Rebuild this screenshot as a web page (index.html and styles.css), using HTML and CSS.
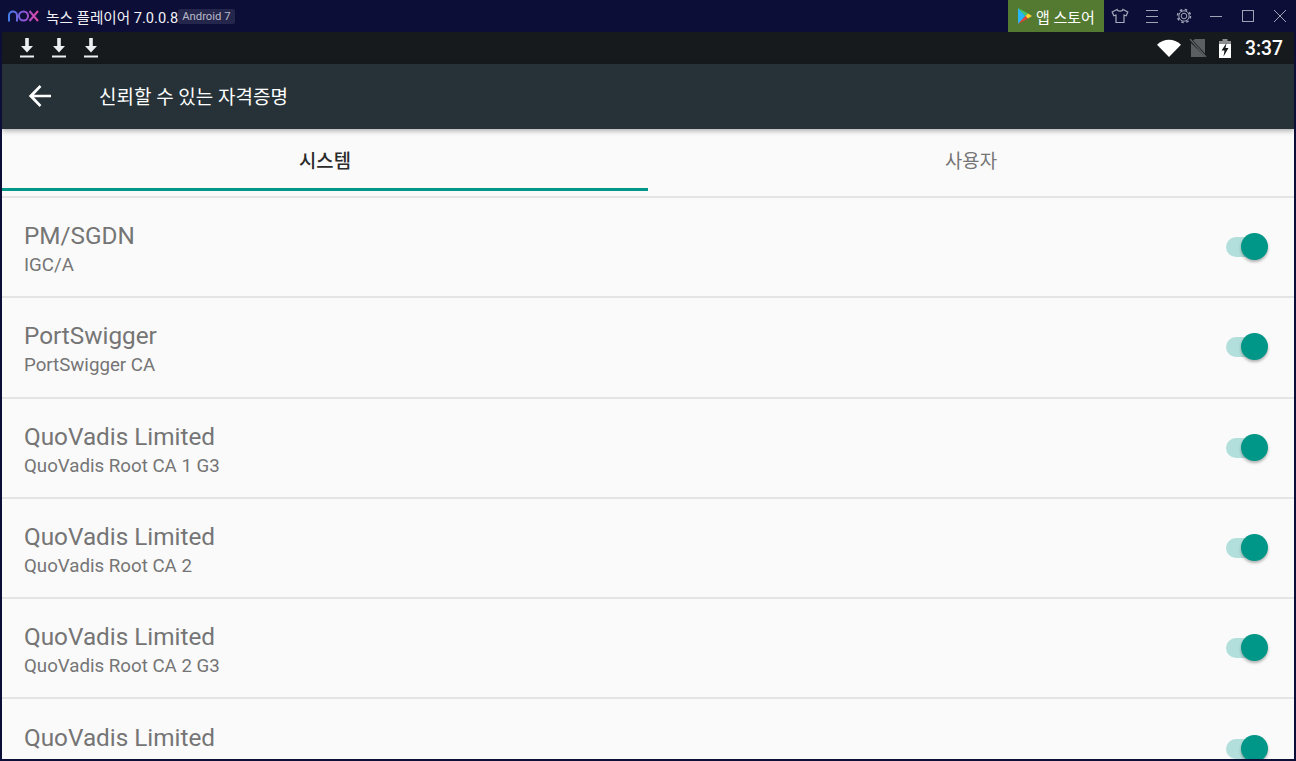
FILE: index.html
```html
<!DOCTYPE html>
<html lang="ko">
<head>
    <meta charset="UTF-8">
    <title>Nox Player</title>
    <link rel="stylesheet" href="styles.css">
</head>
<body>
<div class="window">
    <header class="titlebar">
        <div class="brand">
            <svg class="nox-logo" width="31" height="12" viewBox="0 0 31 12" fill="none" stroke-width="2">
                <defs>
                    <linearGradient id="nox-grad" gradientUnits="userSpaceOnUse" x1="0" y1="0" x2="31" y2="0">
                        <stop offset="0" stop-color="#3f7fe8"/>
                        <stop offset="0.5" stop-color="#8a55d8"/>
                        <stop offset="1" stop-color="#e8489c"/>
                    </linearGradient>
                </defs>
                <path d="M1 11.500V5.500a4 4 0 0 1 8 0V11.500" stroke="url(#nox-grad)"/>
                <circle cx="15.500" cy="6" r="4.500" stroke="url(#nox-grad)"/>
                <path d="M21.500 1l8.500 10M30 1L21.500 11" stroke="url(#nox-grad)"/>
            </svg>
            <span class="app-name">녹스 플레이어 7.0.0.8</span>
            <span class="android-tag">Android 7</span>
        </div>
        <div class="win-actions">
            <a class="store-btn" href="#">
                <svg width="14" height="16" viewBox="0 0 14 16">
                    <path d="M0 0L7.5 8L0 16Z" fill="#29b6f6"/>
                    <path d="M0 0L10 5.5L7.5 8Z" fill="#43c66a"/>
                    <path d="M0 16L10 10.5L7.5 8Z" fill="#e8413c"/>
                    <path d="M10 5.500L14 8L10 10.500L7.500 8Z" fill="#fdd22c"/>
                </svg>
                <span>앱 스토어</span>
            </a>
            <button class="win-btn">
                <svg width="18" height="16" viewBox="0 0 18 16" fill="none" stroke="#a9aabc" stroke-width="1.200">
                    <path d="M6 1.500L1.200 4l1.600 3.800L5 7v7.500h8V7l2.200.8L16.800 4 12 1.500c-.5 2.200-5.500 2.200-6 0Z"/>
                </svg>
            </button>
            <button class="win-btn">
                <svg width="16" height="16" viewBox="0 0 16 16" stroke="#a2a3b6">
                    <path d="M2 2.500h12M2 8.500h12M2 14.500h12"/>
                </svg>
            </button>
            <button class="win-btn">
                <svg width="16" height="16" viewBox="0 0 16 16" fill="none" stroke="#a2a3b6">
                    <circle cx="8" cy="8" r="2.800"/>
                    <circle cx="8" cy="8" r="5.200"/>
                    <circle cx="8" cy="8" r="6.500" stroke-width="1.500" stroke-dasharray="2.550 2.550"/>
                </svg>
            </button>
            <button class="win-btn">
                <svg width="16" height="16" viewBox="0 0 16 16" stroke="#a2a3b6">
                    <path d="M2 8.500h12"/>
                </svg>
            </button>
            <button class="win-btn">
                <svg width="16" height="16" viewBox="0 0 16 16" fill="none" stroke="#a2a3b6">
                    <rect x="2.500" y="2.500" width="11" height="11"/>
                </svg>
            </button>
            <button class="win-btn">
                <svg width="16" height="16" viewBox="0 0 16 16" stroke="#a2a3b6">
                    <path d="M2 2l12 12M14 2L2 14"/>
                </svg>
            </button>
        </div>
    </header>

    <main class="screen">
        <div class="statusbar">
            <div class="notif-icons">
                <svg width="16" height="20" viewBox="0 0 16 20"><path d="M6.200 0h3.600v8H14l-6 6.500L2 8h4.200zM1 17.500h14v2H1z" fill="#eceff1"/></svg>
                <svg width="16" height="20" viewBox="0 0 16 20"><path d="M6.200 0h3.600v8H14l-6 6.500L2 8h4.200zM1 17.500h14v2H1z" fill="#eceff1"/></svg>
                <svg width="16" height="20" viewBox="0 0 16 20"><path d="M6.200 0h3.600v8H14l-6 6.500L2 8h4.200zM1 17.500h14v2H1z" fill="#eceff1"/></svg>
            </div>
            <div class="sys-icons">
                <svg class="wifi-icon" width="24" height="18" viewBox="0 0 24 18"><path d="M0 5.800C6.800 -0.900 17.200 -0.900 24 5.800L12 18Z" fill="#fff"/></svg>
                <svg class="sim-icon" width="18" height="18" viewBox="0 0 18 18">
                    <path d="M4 1.500 6 0h10v14.500Z M2 4v14h13.500v-1Z" fill="#5c5f61"/>
                    <path d="M1 0l16 18" stroke="#5c5f61" stroke-width="1.500"/>
                </svg>
                <svg class="battery-icon" width="14" height="19" viewBox="0 0 14 19">
                    <path d="M4.500 0h5v2H13v3H1V2h3.500z" fill="#8e9092"/>
                    <path d="M1 5h12v14H1z" fill="#fff"/>
                    <path d="M8.500 4L3.500 11.500h3L5.500 17.500 10.500 9H7.500z" fill="#161a1d"/>
                </svg>
                <span class="clock">3:37</span>
            </div>
        </div>

        <div class="toolbar">
            <svg class="back-icon" width="24" height="24" viewBox="0 0 24 24"><path d="M23 10.800H6l7.400-7.700L11.600 1 .8 12l10.800 11 1.800-2.100L6 13.200h17z" fill="#fff"/></svg>
            <h1 class="page-title">신뢰할 수 있는 자격증명</h1>
        </div>

        <nav class="tabs">
            <div class="tab active">시스템</div>
            <div class="tab">사용자</div>
        </nav>

        <ul class="cert-list">
            <li class="cert-row">
                <div class="cert-text"><div class="cert-org">PM/SGDN</div><div class="cert-name">IGC/A</div></div>
                <span class="switch"></span>
            </li>
            <li class="cert-row">
                <div class="cert-text"><div class="cert-org">PortSwigger</div><div class="cert-name">PortSwigger CA</div></div>
                <span class="switch"></span>
            </li>
            <li class="cert-row">
                <div class="cert-text"><div class="cert-org">QuoVadis Limited</div><div class="cert-name">QuoVadis Root CA 1 G3</div></div>
                <span class="switch"></span>
            </li>
            <li class="cert-row">
                <div class="cert-text"><div class="cert-org">QuoVadis Limited</div><div class="cert-name">QuoVadis Root CA 2</div></div>
                <span class="switch"></span>
            </li>
            <li class="cert-row">
                <div class="cert-text"><div class="cert-org">QuoVadis Limited</div><div class="cert-name">QuoVadis Root CA 2 G3</div></div>
                <span class="switch"></span>
            </li>
            <li class="cert-row">
                <div class="cert-text"><div class="cert-org">QuoVadis Limited</div><div class="cert-name">QuoVadis Root CA 3</div></div>
                <span class="switch"></span>
            </li>
        </ul>
    </main>
</div>
</body>
</html>
```

FILE: styles.css
```css
* {
    box-sizing: border-box;
}

html, body {
    margin: 0;
    padding: 0;
    height: 100%;
    overflow: hidden;
}

body {
    font-family: Roboto, "Noto Sans CJK KR", sans-serif;
    background: #0c0e38;
}

.window {
    display: flex;
    flex-direction: column;
    height: 761px;
    background: #0c0e38;
}

/* nox title bar */
.titlebar {
    display: flex;
    justify-content: space-between;
    height: 32px;
    flex: none;
}

.brand {
    display: flex;
    align-items: center;
    padding-left: 8px;
}

.nox-logo {
    margin-right: 7px;
}

.app-name {
    color: #f2f2f6;
    font-size: 14.6px;
}

.android-tag {
    padding: 0 4px;
    height: 15px;
    line-height: 15px;
    border-radius: 2px;
    background: #25264c;
    color: #b9bac8;
    font-size: 11.3px;
}

.win-actions {
    display: flex;
}

.store-btn {
    display: flex;
    align-items: center;
    gap: 4px;
    width: 96px;
    padding-left: 10px;
    background: #537a30;
    color: #fff;
    font-size: 15px;
    text-decoration: none;
}

.win-btn {
    display: flex;
    align-items: center;
    justify-content: center;
    width: 32px;
    height: 32px;
    padding: 0;
    border: 0;
    background: none;
}

/* android screen */
.screen {
    flex: 1;
    display: flex;
    flex-direction: column;
    min-height: 0;
    margin: 0 2px 2px;
    background: #fafafa;
    overflow: hidden;
}

.statusbar {
    display: flex;
    justify-content: space-between;
    align-items: center;
    height: 32px;
    flex: none;
    background: #161a1d;
}

.notif-icons {
    display: flex;
    gap: 16px;
    padding-left: 17px;
}

.sys-icons {
    display: flex;
    align-items: center;
    padding-right: 11px;
}

.sim-icon {
    margin-left: 8px;
}

.battery-icon {
    margin-left: 11px;
}

.clock {
    margin-left: 13px;
    color: #fff;
    font-size: 19.3px;
    font-weight: 500;
}

.toolbar {
    position: relative;
    z-index: 1;
    display: flex;
    align-items: center;
    height: 65px;
    flex: none;
    padding: 0 0 2px 26px;
    background: #263238;
    box-shadow: 0 2px 5px rgba(0, 0, 0, 0.3);
}

.page-title {
    margin: 0 0 0 47px;
    color: #fff;
    font-size: 19px;
    font-weight: 400;
}

.tabs {
    display: flex;
    height: 69px;
    flex: none;
    border-bottom: 2px solid #e4e4e4;
}

.tab {
    flex: 1;
    padding-top: 17px;
    height: 62px;
    text-align: center;
    color: #757575;
    font-size: 18.8px;
}

.tab.active {
    color: #2b2b2b;
    font-weight: 500;
    border-bottom: 3px solid #009688;
}

.cert-list {
    list-style: none;
    margin: 0;
    padding: 0;
}

.cert-row {
    display: flex;
    justify-content: space-between;
    align-items: center;
    height: 100.3px;
    padding: 0 27px 0 22px;
    border-bottom: 2px solid #e4e4e4;
}

.cert-text {
    padding-top: 4px;
}

.cert-org {
    color: #757575;
    font-size: 24.3px;
    line-height: 32px;
}

.cert-name {
    color: #757575;
    font-size: 18.7px;
    line-height: 26px;
}

.switch {
    position: relative;
    display: block;
    width: 41px;
    height: 20px;
    border-radius: 10px;
    background: #b2dfdb;
}

.switch::after {
    content: "";
    position: absolute;
    right: -1px;
    top: -4px;
    width: 27px;
    height: 27px;
    border-radius: 50%;
    background: #009688;
    box-shadow: 0 2px 3px rgba(0, 0, 0, 0.3);
}
```
